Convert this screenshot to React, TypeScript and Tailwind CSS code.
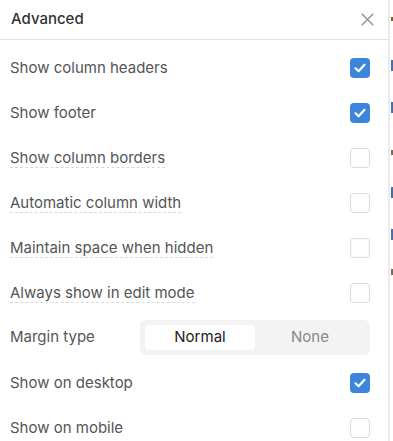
import React from "react";

const Check = ({ checked }: { checked: boolean }) =>
  checked ? (
    <div className="w-5 h-5 rounded-[4px] bg-[#3b86dc] flex items-center justify-center">
      <svg width="14" height="14" viewBox="0 0 14 14" fill="none">
        <path d="M2.5 7.3 L5.6 10.2 L11.5 3.8" stroke="white" strokeWidth="2.2" strokeLinecap="round" strokeLinejoin="round" />
      </svg>
    </div>
  ) : (
    <div className="w-5 h-5 rounded-[4px] border border-[#dcdcdc] bg-white" />
  );

const Row = ({ label, checked, dashed }: { label: string; checked: boolean; dashed?: boolean }) => (
  <div className="h-[45px] shrink-0 flex items-center justify-between pl-[10px] pr-[18px]">
    <span className={"text-[15px] text-[#555] leading-[19px] " + (dashed ? "border-b border-dashed border-[#d9d9d9]" : "")}>{label}</span>
    <Check checked={checked} />
  </div>
);

export default function App() {
  return (
    <div className="w-[393px] h-[441px] overflow-hidden flex bg-white" style={{ fontFamily: "Inter, 'Noto Sans', sans-serif" }}>
      <div className="w-[390px] shrink-0 border-r-2 border-[#ebebeb] flex flex-col">
        <div className="h-[40px] shrink-0 border-b border-[#e3e3e3] flex items-center justify-between pl-[11px] pr-[14px]">
          <span className="text-[15px] font-medium text-[#333]">Advanced</span>
          <svg width="13" height="13" viewBox="0 0 13 13">
            <path d="M0.8 0.8 L12.2 12.2 M12.2 0.8 L0.8 12.2" stroke="#999" strokeWidth="1.6" />
          </svg>
        </div>
        <div className="pt-[5px] flex flex-col shrink-0">
          <Row label="Show column headers" checked />
          <Row label="Show footer" checked />
          <Row label="Show column borders" checked={false} dashed />
          <Row label="Automatic column width" checked={false} dashed />
          <Row label="Maintain space when hidden" checked={false} dashed />
          <Row label="Always show in edit mode" checked={false} dashed />
          <div className="h-[45px] shrink-0 flex items-center justify-between pl-[10px] pr-[18px]">
            <span className="text-[15px] text-[#555]">Margin type</span>
            <div className="w-[230px] h-[35px] bg-[#f3f3f3] rounded-[6px] p-[5px] flex">
              <div className="w-[110px] bg-white rounded-[4px] flex items-center justify-center text-[15px] text-[#222]">Normal</div>
              <div className="flex-1 flex items-center justify-center text-[15px] text-[#888]">None</div>
            </div>
          </div>
          <Row label="Show on desktop" checked />
          <Row label="Show on mobile" checked={false} />
        </div>
      </div>
      <div className="flex-1 flex flex-col pl-[1px]">
        <div className="mt-[17px] h-[4px] w-[2px] bg-[#8a5a20]" />
        <div className="mt-[39px] h-[11px] w-[2px] bg-[#4a6fa8]" />
        <div className="mt-[31px] h-[11px] w-[2px] bg-[#4a6fa8]" />
        <div className="mt-[37px] h-[5px] w-[2px] bg-[#7a6a5a]" />
        <div className="mt-[32px] h-[11px] w-[2px] bg-[#4a6fa8]" />
        <div className="mt-[31px] h-[11px] w-[2px] bg-[#4a6fa8]" />
        <div className="mt-[29px] h-[6px] w-[2px] bg-[#7a6a5a]" />
      </div>
    </div>
  );
}
